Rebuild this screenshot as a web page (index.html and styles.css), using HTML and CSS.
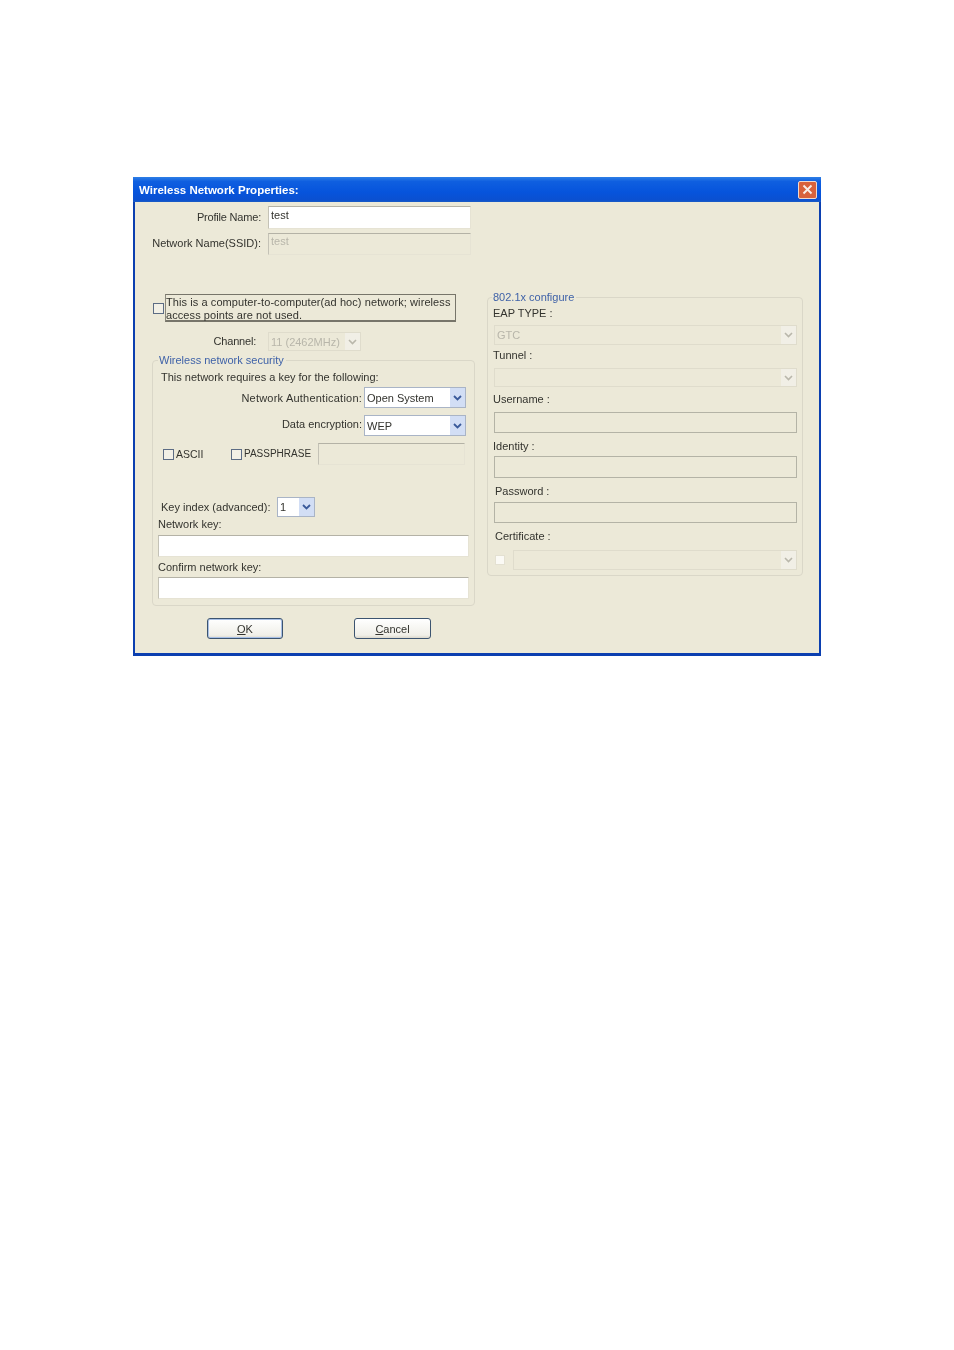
FILE: index.html
```html
<!DOCTYPE html>
<html>
<head>
    <title>Wireless Network Properties</title>
    <link rel="stylesheet" href="styles.css">
</head>
<body>
    <div class="dialog">
        <div class="title-bar">
            <span class="title-text">Wireless Network Properties:</span>
            <div class="close-btn">
                <svg width="11" height="11" viewBox="0 0 11 11"><path d="M1.5 1.5L9.5 9.5M9.5 1.5L1.5 9.5" stroke="#f8eee8" stroke-width="1.9" fill="none"/></svg>
            </div>
        </div>
        <div class="dialog-body">
            <div class="left-col">
                <div class="form-row row-profile">
                    <span class="row-label">Profile Name:</span>
                    <input class="text-box profile-box" type="text" value="test">
                </div>
                <div class="form-row row-ssid">
                    <span class="row-label">Network Name(SSID):</span>
                    <input class="text-box ssid-box" type="text" value="test" disabled>
                </div>
                <div class="adhoc-row">
                    <span class="check"></span>
                    <div class="adhoc-text">This is a computer-to-computer(ad hoc) network; wireless access points are not used.</div>
                </div>
                <div class="form-row row-channel">
                    <span class="row-label channel-label">Channel:</span>
                    <div class="combo combo-off channel-combo">
                        <span class="combo-value">11 (2462MHz)</span>
                        <span class="combo-arrow"><svg width="9" height="6" viewBox="0 0 9 6"><path d="M1 1L4.5 4.5L8 1" stroke="#b9b7ab" stroke-width="1.6" fill="none"/></svg></span>
                    </div>
                </div>
                <div class="group group-security">
                    <div class="group-title">Wireless network security</div>
                    <div class="requires-text">This network requires a key for the following:</div>
                    <div class="combo-row row-auth">
                        <span class="auth-label">Network Authentication:</span>
                        <div class="combo wide-combo">
                            <span class="combo-value">Open System</span>
                            <span class="combo-arrow arrow-on"><svg width="9" height="6" viewBox="0 0 9 6"><path d="M1 1L4.5 4.5L8 1" stroke="#3a5a9a" stroke-width="1.8" fill="none"/></svg></span>
                        </div>
                    </div>
                    <div class="combo-row row-encrypt">
                        <span class="encrypt-label">Data encryption:</span>
                        <div class="combo wide-combo">
                            <span class="combo-value">WEP</span>
                            <span class="combo-arrow arrow-on"><svg width="9" height="6" viewBox="0 0 9 6"><path d="M1 1L4.5 4.5L8 1" stroke="#3a5a9a" stroke-width="1.8" fill="none"/></svg></span>
                        </div>
                    </div>
                    <div class="key-type-row">
                        <span class="check check-ascii"></span>
                        <span class="ascii-label">ASCII</span>
                        <span class="check check-pass"></span>
                        <span class="pass-label">PASSPHRASE</span>
                        <input class="text-box pass-box" type="text" disabled>
                    </div>
                    <div class="key-index-row">
                        <span class="key-index-label">Key index (advanced):</span>
                        <div class="combo index-combo">
                            <span class="combo-value">1</span>
                            <span class="combo-arrow arrow-on"><svg width="9" height="6" viewBox="0 0 9 6"><path d="M1 1L4.5 4.5L8 1" stroke="#3a5a9a" stroke-width="1.8" fill="none"/></svg></span>
                        </div>
                    </div>
                    <div class="key-label">Network key:</div>
                    <input class="text-box key-box" type="text">
                    <div class="key-label confirm-label">Confirm network key:</div>
                    <input class="text-box key-box confirm-box" type="text">
                </div>
                <div class="button-row">
                    <button class="dlg-btn ok-btn"><u>O</u>K</button>
                    <button class="dlg-btn cancel-btn"><u>C</u>ancel</button>
                </div>
            </div>
            <div class="right-col">
                <div class="group group-8021x">
                    <div class="group-title">802.1x configure</div>
                    <div class="side-label">EAP TYPE :</div>
                    <div class="combo combo-off side-combo eap-combo">
                        <span class="combo-value">GTC</span>
                        <span class="combo-arrow"><svg width="9" height="6" viewBox="0 0 9 6"><path d="M1 1L4.5 4.5L8 1" stroke="#b9b7ab" stroke-width="1.6" fill="none"/></svg></span>
                    </div>
                    <div class="side-label tunnel-label">Tunnel :</div>
                    <div class="combo combo-off side-combo tunnel-combo">
                        <span class="combo-value"></span>
                        <span class="combo-arrow"><svg width="9" height="6" viewBox="0 0 9 6"><path d="M1 1L4.5 4.5L8 1" stroke="#b9b7ab" stroke-width="1.6" fill="none"/></svg></span>
                    </div>
                    <div class="side-label user-label">Username :</div>
                    <input class="text-box side-box user-box" type="text" disabled>
                    <div class="side-label identity-label">Identity :</div>
                    <input class="text-box side-box identity-box" type="text" disabled>
                    <div class="side-label pass-side-label">Password :</div>
                    <input class="text-box side-box pass-side-box" type="text" disabled>
                    <div class="side-label cert-label">Certificate :</div>
                    <div class="cert-row">
                        <span class="check check-off"></span>
                        <div class="combo combo-off cert-combo">
                            <span class="combo-value"></span>
                            <span class="combo-arrow"><svg width="9" height="6" viewBox="0 0 9 6"><path d="M1 1L4.5 4.5L8 1" stroke="#b9b7ab" stroke-width="1.6" fill="none"/></svg></span>
                        </div>
                    </div>
                </div>
            </div>
        </div>
    </div>
</body>
</html>
```

FILE: styles.css
```css
body {
    margin: 0;
    padding: 177px 0 0 133px;
    background-color: #ffffff;
    color: #33332e;
    font-family: "Liberation Sans", Arial, sans-serif;
    font-size: 11px;
    line-height: 14px;
}
.dialog {
    width: 688px;
    height: 479px;
    box-sizing: border-box;
    background-color: #ece9d8;
    border: 2px solid #0b3fb0;
    border-top: 0;
    border-bottom-width: 3px;
    filter: blur(0.45px);
}
.title-bar {
    height: 25px;
    margin: 0 -2px;
    padding: 0 4px 0 6px;
    display: flex;
    align-items: center;
    justify-content: space-between;
    background: linear-gradient(to bottom, #2f7fe6 0%, #0f5fe0 18%, #0654dc 60%, #0a50d0 92%, #1c5cc4 100%);
}
.title-text {
    color: #ffffff;
    font-weight: bold;
    font-size: 11.5px;
}
.close-btn {
    width: 19px;
    height: 18px;
    display: flex;
    align-items: center;
    justify-content: center;
    background-color: #d8623c;
    border: 1px solid #f0d8cc;
    border-radius: 2px;
    box-sizing: border-box;
}
.dialog-body {
    display: flex;
}
.left-col {
    width: 340px;
}
.right-col {
    width: 316px;
    margin: 95px 0 0 12px;
}
.form-row {
    display: flex;
    align-items: center;
}
.row-label {
    width: 126px;
    text-align: right;
    margin-right: 7px;
    padding-bottom: 2px;
}
.text-box {
    display: block;
    margin: 0;
    padding: 0 2px;
    box-sizing: border-box;
    background-color: #ffffff;
    border: 1px solid #e6e3d4;
    border-top-color: #b4b2a6;
    border-left-color: #c4c2b6;
    font: inherit;
    color: #33332e;
    outline: none;
}
.text-box:disabled {
    background-color: #ece9d8;
    color: #b8b6aa;
}
.row-profile {
    margin-top: 4px;
    height: 23px;
}
.row-profile .row-label {
    letter-spacing: -0.2px;
}
.profile-box, .ssid-box {
    width: 203px;
    padding-bottom: 6px;
}
.profile-box {
    height: 23px;
}
.row-ssid {
    margin-top: 4px;
    height: 22px;
}
.ssid-box {
    height: 22px;
}
.adhoc-row {
    margin: 39px 0 0 18px;
    display: flex;
    align-items: center;
}
.check {
    display: block;
    width: 11px;
    height: 11px;
    flex: none;
    box-sizing: border-box;
    background-color: #f2f0e6;
    border: 1px solid #5c6c84;
}
.adhoc-text {
    margin-left: 1px;
    width: 291px;
    height: 28px;
    box-sizing: border-box;
    padding: 1px 0 0 0;
    border: 1px solid #77756a;
    border-left-color: #8a887c;
    border-bottom-width: 2px;
    line-height: 12.5px;
    letter-spacing: 0.08px;
}
.row-channel {
    margin-top: 10px;
    height: 19px;
}
.channel-label {
    width: 121px;
    margin-right: 12px;
    letter-spacing: -0.2px;
}
.combo {
    display: flex;
    align-items: center;
    justify-content: space-between;
    box-sizing: border-box;
    background-color: #ffffff;
    border: 1px solid #a9b4c6;
}
.combo-value {
    padding-left: 2px;
}
.combo-arrow {
    width: 15px;
    height: 100%;
    flex: none;
    display: flex;
    align-items: center;
    justify-content: center;
}
.arrow-on {
    background-color: #d2def5;
}
.combo-off {
    background-color: #ece9d8;
    border-color: #dfdccc;
    color: #b8b6aa;
}
.combo-off .combo-arrow {
    background-color: #f1efe6;
}
.channel-combo {
    width: 93px;
    height: 19px;
}
.group {
    position: relative;
    box-sizing: border-box;
    border: 1px solid #dad7c8;
    border-radius: 4px;
}
.group-title {
    position: absolute;
    top: -8px;
    left: 5px;
    padding: 0 2px 0 1px;
    background-color: #ece9d8;
    color: #3f62a8;
}
.group-8021x .group-title {
    left: 4px;
}
.group-security {
    width: 323px;
    height: 246px;
    margin: 9px 0 0 17px;
    padding: 9px 5px 0;
}
.requires-text {
    margin-left: 3px;
}
.combo-row {
    display: flex;
    justify-content: flex-end;
    align-items: center;
    margin-right: 3px;
    gap: 2px;
}
.row-auth {
    margin-top: 3px;
}
.auth-label {
    letter-spacing: 0.22px;
}
.encrypt-label {
    padding-bottom: 3px;
}
.row-encrypt {
    margin-top: 7px;
}
.wide-combo {
    width: 102px;
    height: 21px;
}
.key-type-row {
    margin-top: 7px;
    display: flex;
    align-items: center;
    height: 22px;
}
.check-ascii {
    margin-left: 5px;
}
.ascii-label {
    width: 55px;
    margin-left: 2px;
    font-size: 10.5px;
}
.pass-label {
    width: 74px;
    margin-left: 2px;
    font-size: 10px;
}
.pass-box {
    width: 147px;
    height: 22px;
}
.key-index-row {
    margin-top: 32px;
    height: 20px;
    display: flex;
    align-items: center;
}
.key-index-label {
    width: 116px;
    margin-left: 3px;
}
.index-combo {
    width: 38px;
    height: 20px;
}
.key-box {
    width: 311px;
    height: 22px;
    margin-top: 4px;
}
.confirm-label {
    margin-top: 3px;
}
.confirm-box {
    margin-top: 3px;
}
.button-row {
    margin: 12px 0 0 72px;
    display: flex;
    gap: 71px;
}
.dlg-btn {
    height: 21px;
    padding: 0;
    box-sizing: border-box;
    background: linear-gradient(to bottom, #ffffff, #f0efe8 85%, #dcd8cc);
    border: 1px solid #3c5470;
    border-radius: 3px;
    font: inherit;
    color: #33332e;
}
.ok-btn {
    width: 76px;
    box-shadow: inset 0 0 0 1px #a8c0e6;
}
.cancel-btn {
    width: 77px;
}
.group-8021x {
    height: 279px;
    padding: 8px 5px 0;
}
.side-label {
    height: 14px;
}
.side-combo, .side-box {
    width: 303px;
    margin-left: 1px;
}
.side-box {
    border: 1.5px solid #b4b3a6;
}
.eap-combo {
    height: 20px;
    margin-top: 5px;
}
.tunnel-label {
    margin-top: 3px;
}
.tunnel-combo {
    height: 19px;
    margin-top: 6px;
}
.user-label {
    margin-top: 5px;
}
.user-box {
    height: 21px;
    margin-top: 6px;
}
.identity-label {
    margin-top: 6px;
}
.identity-box {
    height: 22px;
    margin-top: 3px;
}
.pass-side-label {
    margin: 6px 0 0 2px;
}
.pass-side-box {
    height: 21px;
    margin-top: 4px;
}
.cert-label {
    margin: 6px 0 0 2px;
}
.cert-row {
    margin: 7px 0 0 2px;
    display: flex;
    align-items: center;
}
.check-off {
    width: 10px;
    height: 10px;
    background-color: #fbfaf5;
    border-color: #e4e1d2;
}
.cert-combo {
    width: 284px;
    height: 20px;
    margin-left: 8px;
}
```
